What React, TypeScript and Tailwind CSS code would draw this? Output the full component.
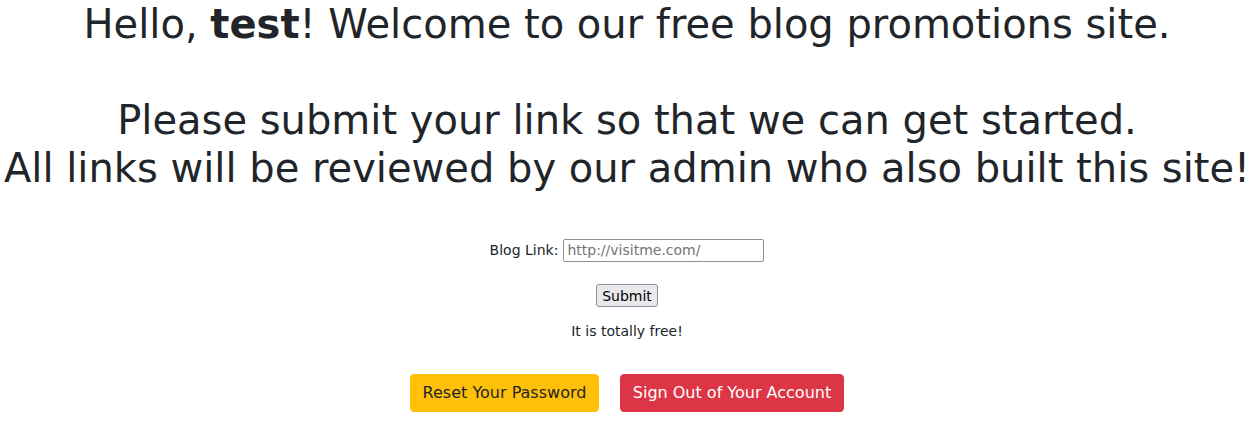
import React from "react";

export default function App() {
  return (
    <div className="w-[1254px] h-[446px] bg-white text-[#212529] text-center" style={{ fontFamily: '"DejaVu Sans", sans-serif' }}>
      <h1 className="text-[40px] leading-[48px] font-normal m-0">
        Hello, <b className="font-bold">test</b>! Welcome to our free blog promotions site.
        <br />
        <br />
        Please submit your link so that we can get started.
        <br />
        All links will be reviewed by our admin who also built this site!
      </h1>
      <div className="mt-[47px] flex justify-center items-center gap-[5px] text-[14px] leading-[23px]">
        <label>Blog Link:</label>
        <input
          type="text"
          placeholder="http://visitme.com/"
          className="w-[201px] h-[23px] border border-[#8f8f9d] rounded-[2px] px-[3px] text-[14px] placeholder:text-[#757575] outline-none"
        />
      </div>
      <div className="mt-[22px] flex justify-center">
        <button className="w-[62px] h-[23px] bg-[#e9e9ed] border border-[#8f8f9d] rounded-[3px] text-[14px] text-black leading-none">
          Submit
        </button>
      </div>
      <p className="mt-[14px] text-[14px] leading-[21px]">It is totally free!</p>
      <div className="mt-[32px] flex justify-center gap-[21px]">
        <button className="w-[189px] h-[38px] bg-[#ffc107] text-[#212529] text-[16px] leading-[24px] rounded-[4px] border border-[#ffc107]">
          Reset Your Password
        </button>
        <button className="w-[224px] h-[38px] bg-[#dc3545] text-white text-[16px] leading-[24px] rounded-[4px] border border-[#dc3545]">
          Sign Out of Your Account
        </button>
      </div>
    </div>
  );
}
